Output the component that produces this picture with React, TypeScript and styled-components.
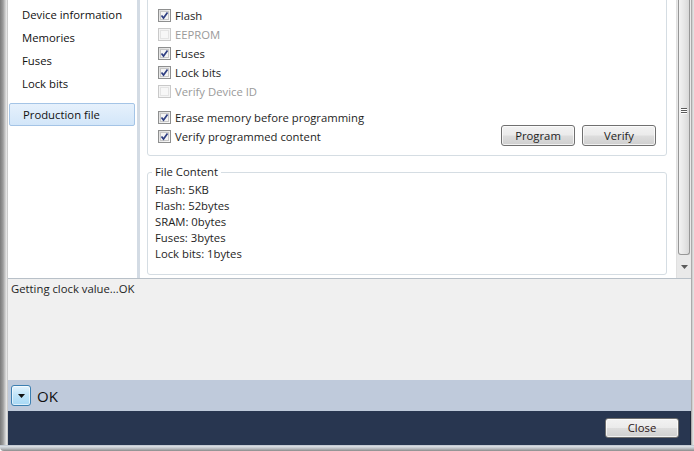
import styled, { createGlobalStyle } from 'styled-components';

const GlobalStyle = createGlobalStyle`
	html, body {
		margin: 0;
		padding: 0;
		background: #ffffff;
	}
	body {
		font-family: 'Open Sans', 'Liberation Sans', sans-serif;
		font-size: 11.3px;
		color: #1e1e1e;
	}
`;

const Window = styled.div`
	width: 694px;
	height: 451px;
	display: grid;
	grid-template-columns: 8px 1fr 3px;
	grid-template-rows: 1fr 6px;
	overflow: hidden;
`;

const LeftFrame = styled.div`
	background: linear-gradient(to right, #7a7a7a 0px, #9c9c9c 3px, #c8c8c8 5px, #eeeeee 7px, #a9a9a9 8px);
`;

const RightFrame = styled.div`
	background: linear-gradient(to right, #8d8d8d 0px, #c9c9c9 1px, #e9e9e9 3px);
`;

const BottomFrame = styled.div`
	grid-column: 1 / -1;
	background: linear-gradient(to bottom, #aab3bf 0px, #dfe3e8 1px, #c3c7cc 3px, #8c8c8c 6px);
	border-bottom-left-radius: 4px;
`;

const Main = styled.div`
	display: flex;
	flex-direction: column;
	min-width: 0;
`;

const TopPane = styled.div`
	height: 278px;
	display: flex;
	border-bottom: 1px solid #b8c0c8;
	background: #ffffff;
`;

const Nav = styled.ul`
	width: 129px;
	margin: 0;
	padding: 3px 0 0;
	list-style: none;
`;

const NavItem = styled.li<{ $selected?: boolean }>`
	height: 23px;
	display: flex;
	align-items: center;
	box-sizing: border-box;
	padding-left: ${({ $selected }) => ($selected ? '13px' : '14px')};
	margin: ${({ $selected }) => ($selected ? '8px 2px 0 1px' : '0')};
	border: ${({ $selected }) => ($selected ? '1px solid #a4c4e6' : 'none')};
	border-radius: 2px;
	background: ${({ $selected }) =>
		$selected ? 'linear-gradient(to bottom, #e6f1fc, #d3e6f9)' : 'transparent'};
	color: #111;
`;

const Splitter = styled.div`
	width: 3px;
	background: #d3dbe4;
`;

const Content = styled.div`
	flex: 1;
	overflow: hidden;
`;

const Scrolled = styled.div`
	margin-top: -12px;
	padding: 0 9px 0 7px;
	display: flex;
	flex-direction: column;
	gap: 9px;
`;

const GroupBox = styled.fieldset<{ $inset: number }>`
	margin: 0;
	border: 1px solid #d5dde3;
	border-radius: 3px;
	padding: 0 10px 0 ${({ $inset }) => $inset}px;
	min-width: 0;
`;

const Legend = styled.legend`
	padding: 0 3px;
	margin-left: -3px;
	line-height: 14px;
	color: #1e1e1e;
`;

const ProgramGrid = styled.div`
	display: flex;
	justify-content: space-between;
	align-items: flex-end;
	padding: 17px 0 9px;
`;

const Checks = styled.div`
	display: flex;
	flex-direction: column;
`;

const CheckRow = styled.label<{ $disabled?: boolean; $gap?: boolean }>`
	height: 19px;
	display: flex;
	align-items: center;
	gap: 4px;
	margin-top: ${({ $gap }) => ($gap ? '7px' : '0')};
	color: ${({ $disabled }) => ($disabled ? '#9a9a9a' : '#1e1e1e')};
`;

const Box = styled.span<{ $disabled?: boolean }>`
	width: 13px;
	height: 13px;
	box-sizing: border-box;
	border: 1px solid ${({ $disabled }) => ($disabled ? '#c9c9c9' : '#8e8f8f')};
	background: ${({ $disabled }) =>
		$disabled ? '#f4f4f4' : 'linear-gradient(135deg, #dcdcdc, #fbfbfb)'};
	display: flex;
	align-items: center;
	justify-content: center;
	padding: 1px;
`;

const Inner = styled.span<{ $disabled?: boolean }>`
	width: 9px;
	height: 9px;
	box-sizing: border-box;
	border: 1px solid ${({ $disabled }) => ($disabled ? '#e4e4e4' : '#c7c7c7')};
	background: ${({ $disabled }) => ($disabled ? '#f7f7f7' : '#f4f4f4')};
	display: flex;
	align-items: center;
	justify-content: center;
	position: relative;
`;

const Buttons = styled.div`
	display: flex;
	gap: 7px;
`;

const Button = styled.button`
	width: 74px;
	height: 21px;
	padding: 0;
	font: inherit;
	color: #1e1e1e;
	border: 1px solid #707070;
	border-radius: 3px;
	background: linear-gradient(to bottom, #f2f2f2 0%, #ebebeb 48%, #dddddd 52%, #cfcfcf 100%);
	box-shadow: inset 0 0 0 1px rgba(255, 255, 255, 0.7);
`;

const InfoList = styled.div`
	display: flex;
	flex-direction: column;
	padding: 3px 0 12px;
	line-height: 16px;
`;

const ScrollBar = styled.div`
	width: 15px;
	display: flex;
	flex-direction: column;
	background: #e9e9e9;
	border-left: 1px solid #e0e0e0;
	box-sizing: border-box;
`;

const Thumb = styled.div`
	height: 255px;
	margin: 0 1px;
	box-sizing: border-box;
	border: 1px solid #979797;
	border-top: none;
	border-radius: 0 0 3px 3px;
	background: linear-gradient(to right, #f3f3f3, #e4e4e4 60%, #d8d8d8);
	display: flex;
	flex-direction: column;
	align-items: center;
	justify-content: center;
	gap: 1px;
	padding-bottom: 34px;
`;

const Grip = styled.span`
	width: 6px;
	height: 1px;
	background: #5a5a5a;
	box-shadow: 0 1px 0 #ffffff;
`;

const ArrowButton = styled.div`
	flex: 1;
	display: flex;
	align-items: center;
	justify-content: center;
`;

const LogPane = styled.div`
	height: 101px;
	background: #f0f0f0;
	padding: 2px 3px;
	box-sizing: border-box;
	line-height: 16px;
`;

const StatusBar = styled.div`
	height: 31px;
	background: #bfcadb;
	display: flex;
	align-items: center;
	gap: 6px;
	padding-left: 3px;
	box-sizing: border-box;
`;

const DropButton = styled.span`
	width: 20px;
	height: 21px;
	box-sizing: border-box;
	border: 1px solid #3c7fb1;
	border-radius: 3px;
	background: linear-gradient(to bottom, #e3f3fd, #bee3f8 50%, #a7d8f5);
	box-shadow: inset 0 0 0 1px rgba(255, 255, 255, 0.6);
	display: flex;
	align-items: center;
	justify-content: center;
`;

const StatusText = styled.span`
	font-size: 15px;
	color: #111;
`;

const ButtonBar = styled.div`
	height: 34px;
	background: #283650;
	display: flex;
	align-items: center;
	justify-content: flex-end;
	padding-right: 11px;
	box-sizing: border-box;
	border-right: 1px solid #1d2638;
`;

const CloseButton = styled(Button)`
	height: 20px;
	margin-bottom: 1px;
	color: #2a1414;
`;

const Triangle = ({ color }: { color: string }) => (
	<svg width='7' height='4' viewBox='0 0 7 4'>
		<path d='M0 0 H7 L3.5 4 Z' fill={color} />
	</svg>
);

const CheckMark = () => (
	<svg width='9' height='9' viewBox='0 0 9 9' style={{ position: 'absolute', left: -1, top: -1 }}>
		<path d='M1.5 4.5 L3.5 7 L7.5 1.5' fill='none' stroke='#2f3f82' strokeWidth='1.7' />
	</svg>
);

interface CheckProps {
	label: string;
	checked?: boolean;
	disabled?: boolean;
	gap?: boolean;
}

function Check({ label, checked, disabled, gap }: CheckProps) {
	return (
		<CheckRow $disabled={disabled} $gap={gap}>
			<Box $disabled={disabled}>
				<Inner $disabled={disabled}>{checked && <CheckMark />}</Inner>
			</Box>
			{label}
		</CheckRow>
	);
}

const navItems = ['Device information', 'Memories', 'Fuses', 'Lock bits'];

const fileContent = ['Flash: 5KB', 'Flash: 52bytes', 'SRAM: 0bytes', 'Fuses: 3bytes', 'Lock bits: 1bytes'];

function App() {
	return (
		<>
			<GlobalStyle />
			<Window>
				<LeftFrame />
				<Main>
					<TopPane>
						<Nav>
							{navItems.map((item) => (
								<NavItem key={item}>{item}</NavItem>
							))}
							<NavItem $selected>Production file</NavItem>
						</Nav>
						<Splitter />
						<Content>
							<Scrolled>
								<GroupBox $inset={10}>
									<ProgramGrid>
										<Checks>
											<Check label='Flash' checked />
											<Check label='EEPROM' disabled />
											<Check label='Fuses' checked />
											<Check label='Lock bits' checked />
											<Check label='Verify Device ID' disabled />
											<Check label='Erase memory before programming' checked gap />
											<Check label='Verify programmed content' checked />
										</Checks>
										<Buttons>
											<Button>Program</Button>
											<Button>Verify</Button>
										</Buttons>
									</ProgramGrid>
								</GroupBox>
								<GroupBox $inset={7}>
									<Legend>File Content</Legend>
									<InfoList>
										{fileContent.map((line) => (
											<span key={line}>{line}</span>
										))}
									</InfoList>
								</GroupBox>
							</Scrolled>
						</Content>
						<ScrollBar>
							<Thumb>
								<Grip />
								<Grip />
								<Grip />
							</Thumb>
							<ArrowButton>
								<Triangle color='#5a5a5a' />
							</ArrowButton>
						</ScrollBar>
					</TopPane>
					<LogPane>Getting clock value...OK</LogPane>
					<StatusBar>
						<DropButton>
							<Triangle color='#111' />
						</DropButton>
						<StatusText>OK</StatusText>
					</StatusBar>
					<ButtonBar>
						<CloseButton>Close</CloseButton>
					</ButtonBar>
				</Main>
				<RightFrame />
				<BottomFrame />
			</Window>
		</>
	);
}

export default App;
